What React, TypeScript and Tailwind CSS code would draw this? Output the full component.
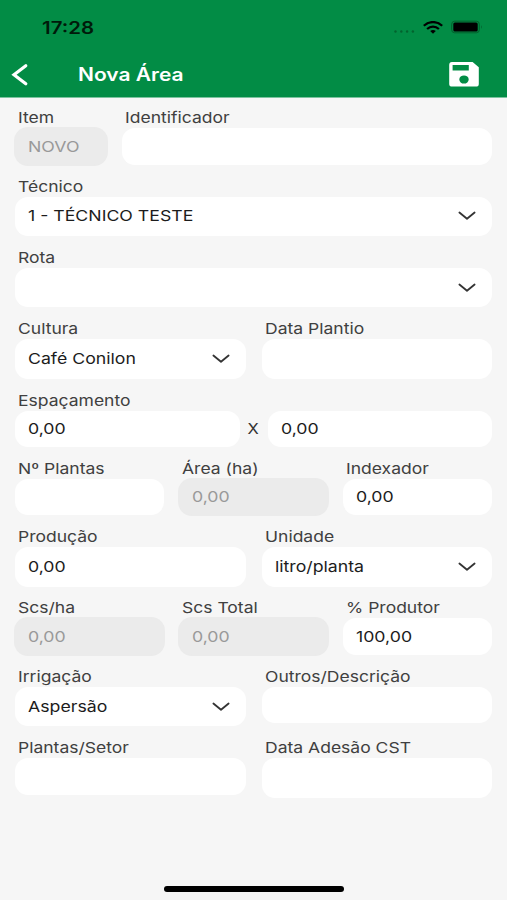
import React from 'react';

interface FieldProps {
  label?: string;
  value?: string;
  disabled?: boolean;
  select?: boolean;
  tall?: boolean;
  className?: string;
}

function Chevron() {
  return (
    <svg className="w-[18px] h-[10px] shrink-0" viewBox="0 0 18 10" fill="none" stroke="#333333" strokeWidth="1.8" strokeLinecap="round" strokeLinejoin="round">
      <path d="M1.4 1.5 L9 7.8 L16.6 1.5" />
    </svg>
  );
}

function Field({ label, value, disabled, select, tall, className = 'flex-1' }: FieldProps) {
  return (
    <div className={`min-w-0 ${className}`}>
      <div className="h-5 pl-[3px] text-[15px] leading-[19px] text-[#404040] whitespace-nowrap">
        <span className="inline-block origin-left scale-x-[1.168]">{label}</span>
      </div>
      <div
        className={`flex items-center justify-between pl-[13px] pr-4 rounded-[13px] text-[15px] leading-[20px] whitespace-nowrap ${
          select || tall ? 'h-[39.5px]' : 'h-[36.5px]'
        } ${disabled ? 'bg-[#ebebeb] text-[#999999] shadow-[0_0_0_1px_#ebebeb]' : 'bg-white text-[#1c1c1c]'}`}
      >
        <span className="inline-block origin-left scale-x-[1.18]">{value}</span>
        {select && <Chevron />}
      </div>
    </div>
  );
}

function StatusBar() {
  return (
    <div className="h-[52px] flex items-start justify-between pl-[42px] pr-[24px] text-[#001a0a]">
      <span className="mt-[18px] text-[17px] leading-5 font-semibold origin-left scale-x-[1.2]">17:28</span>
      <div className="mt-[19px] flex items-center">
        <svg className="w-[23px] h-4" viewBox="0 0 23 16" fill="#03632e">
          <circle cx="2.5" cy="12.5" r="1.2" />
          <circle cx="8.3" cy="12.5" r="1.2" />
          <circle cx="14.1" cy="12.5" r="1.2" />
          <circle cx="19.9" cy="12.5" r="1.2" />
        </svg>
        <svg className="w-5 h-[13px] ml-[7px]" viewBox="0 0 20 13" fill="none" stroke="#000000" strokeWidth="2.2">
          <path d="M0.8 4.7 C6 -0.2 14 -0.2 19.2 4.7" />
          <path d="M4.1 8 C7.5 4.8 12.5 4.8 15.9 8" />
          <path d="M7.2 10 Q10 7.8 12.8 10 L10 12.8 Z" fill="#000000" stroke="none" />
        </svg>
        <svg className="w-8 h-[14px] ml-2" viewBox="0 0 32 14">
          <rect x="0.7" y="1.2" width="27.6" height="11.6" rx="3" fill="none" stroke="#045f2c" />
          <rect x="2.3" y="2.5" width="24.4" height="9" rx="1.6" fill="#000000" />
          <path d="M30 5 Q31.6 7 30 9 Z" fill="#045f2c" />
        </svg>
      </div>
    </div>
  );
}

function Header() {
  return (
    <header className="h-[98px] bg-[#028c45] border-b border-[#7cc39f]">
      <StatusBar />
      <div className="h-[45px] flex items-center pl-[11px] pr-[28px] text-white">
        <svg className="w-[18px] h-[24px]" viewBox="0 0 18 24" fill="none" stroke="#ffffff" strokeWidth="3.2" strokeLinecap="round">
          <path d="M14.8 2.8 L3 11.7 L14.8 20.8" />
        </svg>
        <h1 className="ml-[49px] text-[18px] leading-6 font-semibold origin-left scale-x-[1.165]">Nova Área</h1>
        <svg className="ml-auto w-[30px] h-[25px]" viewBox="0 0 30 25" fill="none">
          <path
            fill="#ffffff"
            fillRule="evenodd"
            d="M3 0 H23.6 L29.8 5.2 V22 Q29.8 24.6 26.8 24.6 H3.2 Q0.2 24.6 0.2 22 V3 Q0.2 0 3 0 Z M3.6 3 V8.6 H19.8 V3 Z M15 13.4 A4.7 4.1 0 1 0 15 21.6 A4.7 4.1 0 1 0 15 13.4 Z"
          />
        </svg>
      </div>
    </header>
  );
}

export default function App() {
  return (
    <div className="w-[507px] h-[900px] flex flex-col overflow-hidden bg-[#f6f6f6] font-['Inter','Liberation_Sans',sans-serif]">
      <Header />
      <main className="flex-1 flex flex-col gap-[11.8px] pt-[10.4px] pl-[15px] pr-[15px]">
        <div className="flex gap-[15px]">
          <Field label="Item" value="NOVO" disabled className="w-[92px]" />
          <Field label="Identificador" />
        </div>
        <div className="flex">
          <Field label="Técnico" value="1 - TÉCNICO TESTE" select />
        </div>
        <div className="flex">
          <Field label="Rota" select />
        </div>
        <div className="flex gap-4">
          <Field label="Cultura" value="Café Conilon" select />
          <Field label="Data Plantio" tall />
        </div>
        <div className="flex">
          <Field label="Espaçamento" value="0,00" />
          <div className="w-7 pt-5 flex items-center justify-center text-[15px] text-[#333333]">
            <span className="scale-x-[1.1]">X</span>
          </div>
          <Field value="0,00" />
        </div>
        <div className="flex gap-[15.5px]">
          <Field label="Nº Plantas" />
          <Field label="Área (ha)" value="0,00" disabled />
          <Field label="Indexador" value="0,00" />
        </div>
        <div className="flex gap-4">
          <Field label="Produção" value="0,00" tall />
          <Field label="Unidade" value="litro/planta" select />
        </div>
        <div className="flex gap-[15.5px]">
          <Field label="Scs/ha" value="0,00" disabled />
          <Field label="Scs Total" value="0,00" disabled />
          <Field label="% Produtor" value="100,00" />
        </div>
        <div className="flex gap-4">
          <Field label="Irrigação" value="Aspersão" select />
          <Field label="Outros/Descrição" />
        </div>
        <div className="flex gap-4">
          <Field label="Plantas/Setor" />
          <Field label="Data Adesão CST" tall />
        </div>
      </main>
      <div className="self-center mb-[8.5px] w-[180px] h-[5.5px] rounded-full bg-black" />
    </div>
  );
}
